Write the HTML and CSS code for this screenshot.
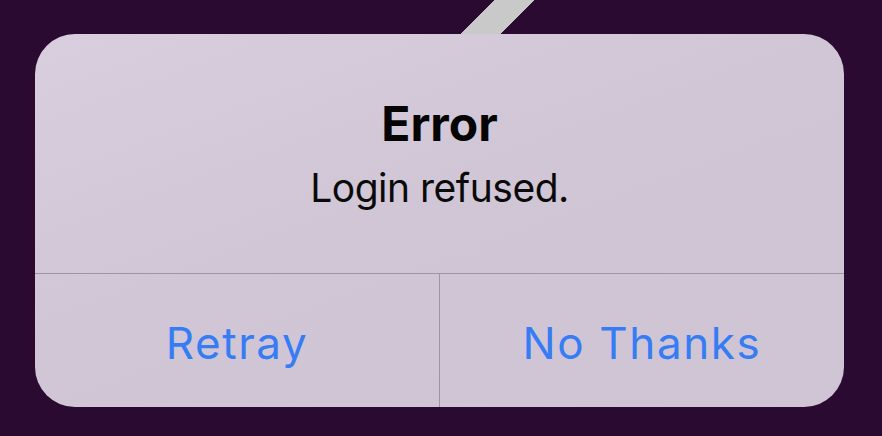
FILE: index.html
```html
<!DOCTYPE html>
<html lang="en">
<head>
  <meta charset="UTF-8" />
  <meta name="viewport" content="width=device-width, initial-scale=1.0"/>
  <title>Error</title>
  <link rel="stylesheet" href="styles.css">
</head>
<body>

  <div class="screen">
    <div class="alert" role="alertdialog">
      <div class="alert-body">
        <h2 class="alert-title">Error</h2>
        <p class="alert-message">Login refused.</p>
      </div>
      <div class="alert-actions">
        <button class="alert-btn">Retray</button>
        <button class="alert-btn">No Thanks</button>
      </div>
    </div>
  </div>

</body>
</html>
```

FILE: styles.css
```css
body {
  margin: 0;
  font-family: Inter, 'Noto Sans', sans-serif;
  background: #2b0a31;
}

/* dark backdrop with the light diagonal band peeking over the alert */
.screen {
  width: 100vw;
  height: 100vh;
  box-sizing: border-box;
  padding: 34px 38px 0 35px;
  background:
    linear-gradient(135deg, transparent 350px, #c9c9c9 350px, #c9c9c9 378px, transparent 378px) top left / 100% 40px no-repeat,
    #2b0a31;
  overflow: hidden;
}

.alert {
  width: 809px;
  height: 373px;
  border-radius: 40px;
  background: linear-gradient(160deg, #d8cedd 0%, #d1c6d6 45%, #cfc4d4 100%);
  display: flex;
  flex-direction: column;
  overflow: hidden;
}

.alert-body {
  height: 240px;
  box-sizing: border-box;
  padding-top: 66px;
  border-bottom: 1px solid #9e94a4;
  text-align: center;
}

.alert-title {
  margin: 0;
  font-size: 48px;
  line-height: 1;
  font-weight: 700;
  color: #050505;
}

.alert-message {
  margin: 20px 0 0;
  font-size: 39px;
  line-height: 1;
  letter-spacing: -0.5px;
  color: #0a0a0a;
}

.alert-actions {
  flex: 1;
  display: flex;
}

.alert-btn {
  flex: 1;
  margin: 0;
  padding: 4px 0 0;
  border: none;
  background: transparent;
  font-family: inherit;
  font-size: 44px;
  line-height: 1;
  letter-spacing: 1.6px;
  color: #367cf4;
  cursor: pointer;
}

.alert-btn + .alert-btn {
  border-left: 1px solid #9e94a4;
}
```
